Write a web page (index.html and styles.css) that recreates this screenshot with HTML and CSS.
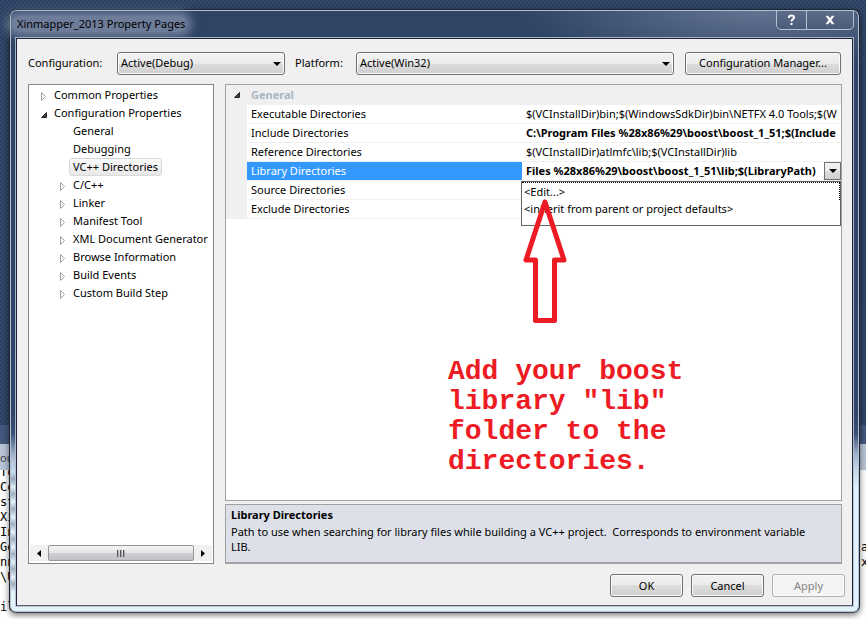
FILE: index.html
```html
<!DOCTYPE html>
<html lang="en">
<head>
<meta charset="utf-8">
<title>Xinmapper_2013 Property Pages</title>
<link rel="stylesheet" href="styles.css">
</head>
<body>
<div class="backdrop">
  <div class="desk"></div>
  <div class="desk-bar"></div>
  <div class="output-bar">ou</div>
  <div class="output">
    <pre class="log">To
Co
st
Xi
In
Ge
nn
\U

il</pre>
    <pre class="log log-end">





a
x</pre>
  </div>
</div>

<main class="dialog">
  <header class="titlebar">
    <h1 class="title">Xinmapper_2013 Property Pages</h1>
    <div class="caption">
      <button class="cap" aria-label="Help"><svg width="9" height="12" viewBox="0 0 9 12"><path d="M2 4V3Q2 1.500 4.500 1.500T7 3.500Q7 4.500 5.500 5.500Q4.500 6.200 4.500 7.500M4.500 9V11" fill="none" stroke="#fff" stroke-width="2"/></svg></button>
      <button class="cap cap-close" aria-label="Close"><svg width="12" height="10" viewBox="0 0 12 10"><path d="M1 .5H4.200L6 2.800 7.800 .5H11L7.700 5 11 9.500H7.800L6 7.200 4.200 9.500H1L4.300 5Z" fill="#fff" stroke="#44506a" stroke-width=".5"/></svg></button>
    </div>
  </header>
  <div class="client">
    <div class="toolbar">
      <label for="config" class="label-config">Configuration:</label>
      <div class="combo combo-config"><select id="config"><option>Active(Debug)</option></select></div>
      <label for="platform" class="label-platform">Platform:</label>
      <div class="combo combo-platform"><select id="platform"><option>Active(Win32)</option></select></div>
      <button class="btn btn-manager">Configuration Manager...</button>
    </div>

    <div class="panes">
      <nav class="tree">
        <ul class="nodes">
          <li class="node"><svg class="tw" width="7" height="9"><path d="M1.500 .5V8.500L5.500 4.500Z"/></svg><span>Common Properties</span></li>
          <li class="node"><svg class="tw open" width="7" height="9"><path d="M6.500 2.500V7.500H1.500Z"/></svg><span>Configuration Properties</span></li>
          <li class="node child"><span>General</span></li>
          <li class="node child"><span>Debugging</span></li>
          <li class="node child"><span class="current">VC++ Directories</span></li>
          <li class="node child"><svg class="tw" width="7" height="9"><path d="M1.500 .5V8.500L5.500 4.500Z"/></svg><span>C/C++</span></li>
          <li class="node child"><svg class="tw" width="7" height="9"><path d="M1.500 .5V8.500L5.500 4.500Z"/></svg><span>Linker</span></li>
          <li class="node child"><svg class="tw" width="7" height="9"><path d="M1.500 .5V8.500L5.500 4.500Z"/></svg><span>Manifest Tool</span></li>
          <li class="node child"><svg class="tw" width="7" height="9"><path d="M1.500 .5V8.500L5.500 4.500Z"/></svg><span>XML Document Generator</span></li>
          <li class="node child"><svg class="tw" width="7" height="9"><path d="M1.500 .5V8.500L5.500 4.500Z"/></svg><span>Browse Information</span></li>
          <li class="node child"><svg class="tw" width="7" height="9"><path d="M1.500 .5V8.500L5.500 4.500Z"/></svg><span>Build Events</span></li>
          <li class="node child"><svg class="tw" width="7" height="9"><path d="M1.500 .5V8.500L5.500 4.500Z"/></svg><span>Custom Build Step</span></li>
        </ul>
        <div class="scroll">
          <button class="scroll-end" aria-label="Scroll left"><svg width="4" height="7"><path d="M4 0V7L0 3.500Z"/></svg></button>
          <div class="thumb"><i></i><i></i><i></i></div>
          <button class="scroll-end" aria-label="Scroll right"><svg width="4" height="7"><path d="M0 0V7L4 3.500Z"/></svg></button>
        </div>
      </nav>

      <section class="props">
        <div class="grid">
          <table class="table">
            <colgroup><col class="c-gutter"><col class="c-name"><col></colgroup>
            <tbody>
              <tr class="group"><td class="gutter"><svg class="tw open" width="7" height="9"><path d="M6.500 2.500V7.500H1.500Z"/></svg></td><th colspan="2">General</th></tr>
              <tr><td class="gutter"></td><td>Executable Directories</td><td class="value">$(VCInstallDir)bin;$(WindowsSdkDir)bin\NETFX 4.0 Tools;$(W</td></tr>
              <tr><td class="gutter"></td><td>Include Directories</td><td class="value strong">C:\Program Files %28x86%29\boost\boost_1_51;$(Include</td></tr>
              <tr><td class="gutter"></td><td>Reference Directories</td><td class="value">$(VCInstallDir)atlmfc\lib;$(VCInstallDir)lib</td></tr>
              <tr class="selected"><td class="gutter"></td><td><label for="libdirs">Library Directories</label></td>
                <td class="editing">
                  <div class="editor"><input id="libdirs" value="Files %28x86%29\boost\boost_1_51\lib;$(LibraryPath)"><button class="drop" aria-label="Open list"></button></div>
                  <ul class="list"><li class="focus">&lt;Edit...&gt;</li><li>&lt;inherit from parent or project defaults&gt;</li></ul>
                </td></tr>
              <tr><td class="gutter"></td><td>Source Directories</td><td></td></tr>
              <tr><td class="gutter"></td><td>Exclude Directories</td><td></td></tr>
            </tbody>
          </table>
          <svg class="arrow" width="46" height="128" viewBox="0 0 46 128"><path d="M23 5L4 63H13.500V123.500H32.500V63H42Z" fill="none" stroke="#ed1c24" stroke-width="5" stroke-linejoin="round"/></svg>
          <p class="note">Add your boost<br>library "lib"<br>folder to the<br>directories.</p>
        </div>
        <div class="help">
          <h2>Library Directories</h2>
          <p>Path to use when searching for library files while building a VC++ project.&nbsp; Corresponds to environment variable LIB.</p>
        </div>
      </section>
    </div>

    <footer class="actions">
      <button class="btn">OK</button>
      <button class="btn">Cancel</button>
      <button class="btn" disabled>Apply</button>
    </footer>
  </div>
</main>
</body>
</html>
```
FILE: styles.css
```css
* { box-sizing: border-box; }

body {
  margin: 0;
  display: grid;
  grid-template: minmax(100vh, auto) / minmax(0, 1fr);
  font: 11px/18px "Noto Sans", "Open Sans", sans-serif;
  color: #000;
  overflow: hidden;
}

h1, h2, p, ul, pre { margin: 0; padding: 0; font-size: 11px; }
ul { list-style: none; }
button, select, input { font: inherit; color: inherit; margin: 0; }

/* The windows behind the dialog */
.backdrop, .dialog { grid-area: 1 / 1; }
.backdrop { display: flex; flex-direction: column; background: #fff; }
.desk {
  flex: 1;
  background:
    radial-gradient(circle at 1px 1px, #2c4162 1px, transparent 1px) 0 0 / 4px 4px,
    radial-gradient(circle at 1px 1px, #2c4162 1px, transparent 1px) 2px 2px / 4px 4px,
    #34496b;
}
.desk-bar { height: 19px; background: #43587d; }
.output-bar { height: 26px; padding-top: 5px; background: #b9c5d8; color: #3a4048; }
.output { height: 149px; display: flex; justify-content: space-between; overflow: hidden; }
.log { font: 12px/15px "DejaVu Sans Mono", monospace; margin-top: -5px; }
.log-end { width: 5px; }

/* Glass frame */
.dialog {
  margin: 9px 6px 6px 9px;
  display: flex;
  flex-direction: column;
  padding: 0 6px 6px;
  border: 1px solid #1c2636;
  border-bottom-color: #3c4650;
  border-radius: 7px;
  background:
    repeating-linear-gradient(transparent 0, rgba(60, 75, 95, .4) 7px, transparent 15px) 0 462px / 6px 120px no-repeat,
    radial-gradient(ellipse 240px 60px at 88% 0, rgba(150, 165, 190, .5), transparent),
    linear-gradient(#2f4364 0, #30456a 390px, #2f4466 404px, #3a5075 424px, #9fb2cc 444px, #c9dcec 462px, #e4f3fb 480px, #e4f3fb 100%);
  box-shadow: inset 0 0 0 1px #b4c0d0, 0 2px 6px rgba(0, 0, 0, .55);
}
.titlebar { display: flex; justify-content: space-between; height: 28px; }
.title {
  align-self: center;
  margin-left: -5px;
  padding: 0 2px 0 6px;
  font-weight: 400;
  line-height: 16px;
  border-radius: 8px;
  background: rgba(150, 164, 188, .6);
  box-shadow: 0 0 8px 5px rgba(150, 164, 188, .6);
}
.caption {
  display: flex;
  height: 20px;
  margin-right: -1px;
  border: 1px solid #b4c0d0;
  border-radius: 0 0 5px 5px;
  background: linear-gradient(#5b6c88, #4a5c7a);
}
.cap {
  width: 29px;
  padding: 0;
  display: flex;
  align-items: center;
  justify-content: center;
  border: 0;
  background: transparent;
}
.cap-close { width: 47px; border-left: 1px solid #b4c0d0; }
.client {
  flex: 1;
  display: flex;
  flex-direction: column;
  border: 1px solid #1c2636;
  border-bottom-color: #5a6068;
  outline: 1px solid rgba(180, 192, 208, .9);
  background: #f0f0f0;
}

/* Top row */
.toolbar { display: flex; align-items: center; padding: 12px 11px 0; height: 36px; }
.label-config { width: 89px; }
.label-platform { width: 61px; margin-left: 10px; }
.combo { position: relative; height: 23px; }
.combo-config { width: 168px; }
.combo-platform { flex: 1; margin-right: 11px; }
.combo select {
  appearance: none;
  width: 100%;
  height: 23px;
  padding: 0 3px;
  border: 1px solid #707070;
  border-radius: 3px;
  background: linear-gradient(#f2f2f2, #ebebeb 50%, #dddddd 50%, #cfcfcf);
  box-shadow: inset 0 0 0 1px #fafafa;
}
.combo::after, .drop::after {
  content: "";
  border: 4px solid transparent;
  border-top-color: #000;
  border-bottom: 0;
}
.combo::after { position: absolute; right: 4px; top: 10px; pointer-events: none; }
.btn {
  width: 73px;
  height: 23px;
  padding: 0;
  border: 1px solid #707070;
  border-radius: 3px;
  background: linear-gradient(#f2f2f2, #ebebeb 50%, #dddddd 50%, #cfcfcf);
  box-shadow: inset 0 0 0 1px #fafafa;
}
.btn:disabled { color: #838383; border-color: #adb2b5; background: #f4f4f4; }
.btn-manager { width: 156px; }

/* Panes */
.panes { flex: 1; display: flex; gap: 11px; padding: 9px 10px 0 11px; }
.tree {
  width: 186px;
  display: flex;
  flex-direction: column;
  justify-content: space-between;
  padding: 1px 1px 2px;
  border: 1px solid #828790;
  background: #fff;
  overflow: hidden;
}
.node { position: relative; height: 18px; padding-left: 24px; white-space: nowrap; }
.child { padding-left: 43px; }
.tw { fill: #fff; stroke: #a0a0a0; }
.tw.open { fill: #404040; stroke: #262626; }
.node .tw { position: absolute; left: 10px; top: 6px; }
.child .tw { left: 29px; }
.current {
  display: inline-block;
  line-height: 16px;
  margin-left: -4px;
  padding: 0 3px;
  border: 1px solid #d9d9d9;
  border-radius: 3px;
  background: linear-gradient(#fafafa, #e8e8e8);
}
.scroll { display: flex; height: 16px; background: #f0f0f0; }
.scroll-end { width: 18px; padding: 0; border: 0; background: transparent; display: flex; align-items: center; justify-content: center; }
.thumb {
  flex: 1;
  display: flex;
  align-items: center;
  justify-content: center;
  gap: 1px;
  border: 1px solid #979797;
  border-radius: 2px;
  background: linear-gradient(#f3f3f3, #e4e4e6 50%, #d0d1d4 50%, #bfc1c4);
}
.thumb i { width: 2px; height: 7px; background: linear-gradient(90deg, #555 50%, #aaa 50%); }

.props { flex: 1; min-width: 0; display: flex; flex-direction: column; gap: 3px; }
.grid { position: relative; flex: 1; border: 1px solid #a0a0a0; background: #fff; }
.table { width: 100%; table-layout: fixed; border-collapse: separate; border-spacing: 0; }
.c-gutter { width: 21px; }
.c-name { width: 275px; }
.table td, .table th { height: 19px; padding: 0 4px; border-bottom: 1px solid #f0f0f0; text-align: left; white-space: nowrap; }
.table .gutter { padding: 0 7px; background: #f0f0f0; line-height: 9px; }
.table .group th, .table .group td { height: 20px; background: #f0f0f0; color: #a9b5c5; }
.table .value { padding-right: 0; overflow: hidden; text-overflow: clip; }
.strong { font-weight: 700; }
.selected td:nth-child(2) { background: #3399ff; color: #fff; }
.table .editing { position: relative; padding: 0; }
.editor { display: flex; height: 18px; }
.editor input { flex: 1; min-width: 0; padding: 0 0 0 4px; border: 0; background: #fff; font-weight: 700; outline: 0; }
.drop {
  width: 17px;
  padding: 0;
  display: flex;
  align-items: center;
  justify-content: center;
  border: 1px solid #707070;
  background: linear-gradient(#f2f2f2, #ebebeb 50%, #dddddd 50%, #cfcfcf);
}
.list {
  position: absolute;
  top: 19px;
  left: -1px;
  right: 0;
  height: 45px;
  border: 1px solid #646464;
  background: #fff;
}
.list li { height: 18px; padding-left: 2px; }
.list .focus { border: 1px dotted #000; border-width: 1px 1px 0 0; line-height: 17px; }
.arrow { position: absolute; left: 296px; top: 112px; }
.note {
  position: absolute;
  left: 222px;
  top: 272px;
  color: #ed1c24;
  font: 700 28px/30px "Liberation Mono", monospace;
}
.help { height: 60px; padding: 1px 16px 1px 5px; border: 1px solid #a0a0a0; border-bottom-width: 2px; background: #dde0e8; }
.help p { line-height: 15px; }

.actions { display: flex; justify-content: flex-end; gap: 8px; padding: 10px 7px 8px; }
```
